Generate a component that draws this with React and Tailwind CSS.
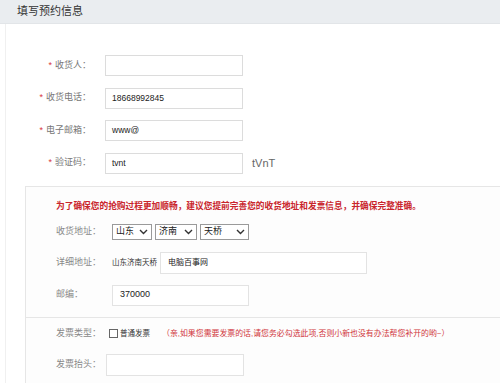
const Star = () => <span className="text-[#d9363e] mr-[3px]">*</span>;

function TopRow({ label, value, extra }) {
  return (
    <div className="flex items-center h-[21px]">
      <div className="w-[91px] text-right text-[9px] text-[#777] pr-[1px]">
        <Star />
        {label}：
      </div>
      <div className="ml-[13px] w-[138px] h-[21px] border border-[#dcdcdc] bg-white flex items-center pl-[6px]">
        <span className="text-[8.5px] text-[#222]">{value}</span>
      </div>
      {extra && <span className="ml-[9px] text-[11px] text-[#666]">{extra}</span>}
    </div>
  );
}

function FakeSelect({ text, w }) {
  return (
    <div
      className={`h-[16px] ${w} border border-[#9a9a9a] bg-white flex items-center justify-between pl-[3px] pr-[3px] text-[9px] text-[#222]`}
    >
      <span>{text}</span>
      <svg width="9" height="6" viewBox="0 0 9 6">
        <path d="M1 1 L4.5 4.5 L8 1" fill="none" stroke="#333" strokeWidth="1.4" />
      </svg>
    </div>
  );
}

export default function App() {
  return (
    <div className="w-[500px] h-[383px] bg-white overflow-hidden font-['Liberation_Sans','Noto_Sans_CJK_SC',sans-serif]">
      {/* Header */}
      <div className="h-[24px] bg-[#eaedf0] flex items-center pl-[17px] text-[11px] text-[#333] border-b border-[#e2e5e8]">
        填写预约信息
      </div>

      <div className="border-l border-[#f0f0f0] ml-[5px]">
        {/* Top fields */}
        <div className="pt-[31px] flex flex-col gap-[11.5px] -ml-[5px]">
          <TopRow label="收货人" value="" />
          <TopRow label="收货电话" value="18668992845" />
          <TopRow label="电子邮箱" value="www@" />
          <TopRow label="验证码" value="tvnt" extra="tVnT" />
        </div>

        {/* Address / invoice box */}
        <div className="mt-[12px] ml-[19px] border border-r-0 border-[#e6e6e6] bg-[#fdfdfd]">
          <div className="pl-[30px] pr-[10px] pb-[11px]">
            <div className="pt-[13px] h-[25px] text-[8.7px] leading-[12px] font-bold text-[#c9252c] whitespace-nowrap">
              为了确保您的抢购过程更加顺畅，建议您提前完善您的收货地址和发票信息，并确保完整准确。
            </div>

            <div className="mt-[12px] flex items-center h-[16px]">
              <div className="w-[56px] text-[9px] text-[#888]">收货地址：</div>
              <div className="flex gap-[3px]">
                <FakeSelect text="山东" w="w-[40px]" />
                <FakeSelect text="济南" w="w-[42px]" />
                <FakeSelect text="天桥" w="w-[49px]" />
              </div>
            </div>

            <div className="mt-[12px] flex items-center h-[22px]">
              <div className="w-[56px] text-[9px] text-[#888]">详细地址：</div>
              <span className="text-[7.5px] text-[#333] w-[48px] whitespace-nowrap">山东济南天桥</span>
              <div className="w-[207px] h-[22px] border border-[#e3e3e3] bg-white flex items-center pl-[7px] text-[8px] text-[#222]">
                电脑百事网
              </div>
            </div>

            <div className="mt-[11px] flex items-center h-[21px]">
              <div className="w-[56px] text-[9px] text-[#888]">邮编：</div>
              <div className="w-[137px] h-[21px] border border-[#e3e3e3] bg-white flex items-center pl-[7px] text-[9px] text-[#222]">
                370000
              </div>
            </div>
          </div>

          <div className="border-t border-[#e6e6e6] pl-[30px] pt-[9px] pb-[20px]">
            <div className="flex items-center h-[14px]">
              <div className="w-[53px] text-[9px] text-[#888]">发票类型：</div>
              <div className="w-[9px] h-[9px] border border-[#666] bg-white" />
              <span className="ml-[2px] text-[7.5px] text-[#333]">普通发票</span>
              <span className="ml-[12px] text-[7.9px] text-[#d0353b] whitespace-nowrap">
                （亲,如果您需要发票的话,请您务必勾选此项,否则小新也没有办法帮您补开的哟~）
              </span>
            </div>

            <div className="mt-[13px] flex items-center h-[22px]">
              <div className="w-[50px] text-[9px] text-[#888]">发票抬头：</div>
              <div className="w-[138px] h-[22px] border border-[#e3e3e3] bg-white" />
            </div>
          </div>
        </div>
      </div>
    </div>
  );
}
